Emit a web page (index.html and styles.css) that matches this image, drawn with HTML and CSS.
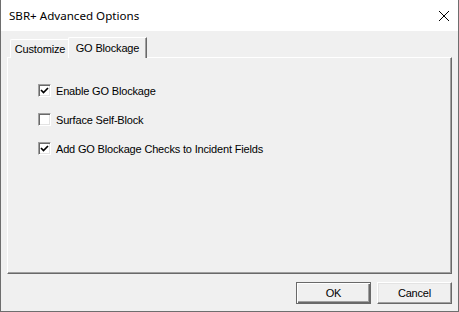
FILE: index.html
```html
<!DOCTYPE html>
<html lang="en">
<head>
    <title>SBR+ Advanced Options</title>
    <link rel="stylesheet" href="styles.css">
</head>
<body>
    <div class="window">
        <div class="titlebar">
            <span class="title">SBR+ Advanced Options</span>
            <svg class="close" width="10" height="10" viewBox="0 0 10 10">
                <path d="M0 0 L10 10 M10 0 L0 10" stroke="#000" stroke-width="1" fill="none"/>
            </svg>
        </div>
        <div class="content">
            <div class="tabs">
                <div class="tab">Customize</div>
                <div class="tab selected">GO Blockage</div>
            </div>
            <div class="panel">
                <div class="check-row">
                    <span class="box checked">
                        <svg width="9" height="9" viewBox="0 0 9 9"><path d="M1 4 L3.5 6.5 L8 2" stroke="#000" stroke-width="1.7" fill="none"/></svg>
                    </span>
                    <span>Enable GO Blockage</span>
                </div>
                <div class="check-row">
                    <span class="box"></span>
                    <span>Surface Self-Block</span>
                </div>
                <div class="check-row">
                    <span class="box checked">
                        <svg width="9" height="9" viewBox="0 0 9 9"><path d="M1 4 L3.5 6.5 L8 2" stroke="#000" stroke-width="1.7" fill="none"/></svg>
                    </span>
                    <span>Add GO Blockage Checks to Incident Fields</span>
                </div>
            </div>
            <div class="buttons">
                <button class="button default">OK</button>
                <button class="button">Cancel</button>
            </div>
        </div>
    </div>
</body>
</html>
```

FILE: styles.css
```css
body {
    margin: 0;
    background-color: #f0f0f0;
    font-family: "Liberation Sans", Arial, sans-serif;
    font-size: 11px;
    letter-spacing: -0.17px;
    color: #000;
}
.window {
    width: 459px;
    height: 312px;
    box-sizing: border-box;
    border-left: 1px solid #6e6e6e;
    border-right: 1px solid #6e6e6e;
    border-bottom: 1px solid #6e6e6e;
    background-color: #f0f0f0;
    display: flex;
    flex-direction: column;
}
.titlebar {
    height: 31px;
    flex: none;
    background-color: #fff;
    display: flex;
    align-items: center;
    padding: 0 9px 0 8px;
}
.title {
    font-family: "Noto Sans", sans-serif;
    font-size: 11.6px;
    letter-spacing: 0;
}
.close {
    margin-left: auto;
}
.content {
    flex: 1;
    display: flex;
    flex-direction: column;
    padding: 7px 6px 7px 6px;
}
.tabs {
    height: 20px;
    display: flex;
    align-items: flex-end;
    position: relative;
    z-index: 1;
    margin-bottom: -1px;
}
.tab {
    box-sizing: border-box;
    height: 19px;
    width: 60px;
    margin-left: 3px;
    padding-top: 3px;
    text-align: center;
    border-top: 1px solid #fff;
    border-left: 1px solid #fff;
    border-right: 1px solid #a0a0a0;
    border-top-left-radius: 2px;
    background-color: #f0f0f0;
}
.tab.selected {
    height: 21px;
    width: 79px;
    margin-left: -2px;
    padding-top: 4px;
    border-right: 1px solid #696969;
    box-shadow: inset -1px 0 #a0a0a0;
}
.panel {
    flex: 1;
    display: flex;
    flex-direction: column;
    gap: 12px;
    padding: 24px 0 0 30px;
    border-top: 1px solid #fff;
    border-left: 1px solid #fff;
    border-right: 1px solid #696969;
    border-bottom: 1px solid #696969;
    box-shadow: inset -1px -1px #a0a0a0;
}
.check-row {
    height: 17px;
    display: flex;
    align-items: center;
    gap: 5px;
}
.box {
    box-sizing: border-box;
    width: 13px;
    height: 13px;
    display: flex;
    align-items: center;
    justify-content: center;
    background-color: #fff;
    border: 1px solid;
    border-color: #a0a0a0 #fff #fff #a0a0a0;
    box-shadow: inset 1px 1px #696969, inset -1px -1px #e3e3e3;
}
.buttons {
    display: flex;
    justify-content: flex-end;
    gap: 6px;
    margin-top: 8px;
}
.button {
    box-sizing: border-box;
    width: 75px;
    height: 22px;
    font-family: "Liberation Sans", Arial, sans-serif;
    font-size: 11px;
    letter-spacing: -0.17px;
    color: #000;
    background-color: #f0f0f0;
    border: 1px solid;
    border-color: #fff #696969 #696969 #fff;
    box-shadow: inset -1px -1px #a0a0a0, inset 1px 1px #e3e3e3;
    padding: 0;
}
.button.default {
    border: 1px solid #696969;
    box-shadow: inset 1px 1px #fff, inset -1px -1px #696969, inset -2px -2px #a0a0a0;
}
```
